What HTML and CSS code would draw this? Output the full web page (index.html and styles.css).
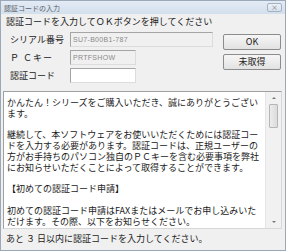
FILE: index.html
```html
<!DOCTYPE html>
<html lang="ja">
<head>
    <meta charset="UTF-8">
    <title>認証コードの入力</title>
    <link rel="stylesheet" href="styles.css">
</head>
<body>
    <div class="window">
        <div class="titlebar">
            <span class="title">認証コードの入力</span>
            <span class="close">×</span>
        </div>
        <div class="content">
            <p class="lead">認証コードを入力してＯＫボタンを押してください</p>
            <div class="top">
                <div class="fields">
                    <div class="row">
                        <span class="label">シリアル番号</span>
                        <div class="field wide readonly">SU7-B00B1-787</div>
                    </div>
                    <div class="row">
                        <span class="label pc">Ｐ Ｃキー</span>
                        <div class="field readonly">PRTFSHOW</div>
                    </div>
                    <div class="row">
                        <span class="label">認証コード</span>
                        <div class="field"></div>
                    </div>
                </div>
                <div class="buttons">
                    <div class="btn">OK</div>
                    <div class="btn">未取得</div>
                </div>
            </div>
            <div class="memo">
                <div class="memo-text">
                    かんたん！シリーズをご購入いただき、誠にありがとうござい<br>
                    ます。<br>
                    <br>
                    継続して、本ソフトウェアをお使いいただくためには認証コー<br>
                    ドを入力する必要があります。認証コードは、正規ユーザーの<br>
                    方がお手持ちのパソコン独自のＰＣキーを含む必要事項を弊社<br>
                    にお知らせいただくことによって取得することができます。<br>
                    <br>
                    【初めての認証コード申請】<br>
                    <br>
                    初めての認証コード申請はFAXまたはメールでお申し込みいた<br>
                    だけます。その際、以下をお知らせください。
                </div>
                <div class="scrollbar">
                    <span class="arrow up"></span>
                    <span class="thumb"></span>
                    <span class="arrow down"></span>
                </div>
            </div>
            <p class="status">あと ３ 日以内に認証コードを入力してください。</p>
        </div>
    </div>
</body>
</html>
```

FILE: styles.css
```css
*{
    box-sizing: border-box;
}
body{
    margin: 0;
    background-color: #f0f0f0;
    font-family: "Noto Sans CJK JP", "Liberation Sans", sans-serif;
    color: #1a1a1a;
}
.window{
    width: 286px;
    height: 251px;
    border: 1px solid #9ba8b8;
    background-color: #f0f0f0;
    overflow: hidden;
}
.titlebar{
    height: 13px;
    display: flex;
    align-items: center;
    justify-content: space-between;
    padding: 0 3px 0 3px;
    background: linear-gradient(#e3ebf5, #d3dfec);
}
.title{
    font-size: 7px;
    line-height: 12px;
    color: #5a606a;
}
.close{
    width: 15px;
    height: 9px;
    border: 1px solid #a3b1c3;
    border-radius: 2px;
    background: linear-gradient(#eef2f7, #d8e1ec);
    font-size: 7px;
    line-height: 7px;
    text-align: center;
    color: #6b7686;
}
.content{
    padding: 0 3px 0 2px;
}
.lead{
    margin: 0 0 0 3px;
    height: 15px;
    font-size: 9px;
    line-height: 15px;
    white-space: nowrap;
}
.top{
    height: 62px;
    display: flex;
}
.fields{
    margin-left: 7px;
    padding-top: 3px;
    display: flex;
    flex-direction: column;
    gap: 3px;
}
.row{
    display: flex;
    align-items: center;
    height: 15px;
}
.label{
    width: 60px;
    font-size: 9px;
    color: #222;
    white-space: nowrap;
}
.label.pc{
    letter-spacing: 1px;
}
.field{
    width: 66px;
    height: 15px;
    border: 1px solid #a5a5a5;
    border-right-color: #dcdcdc;
    border-bottom-color: #dcdcdc;
    background-color: #fff;
    font-family: "Liberation Sans", sans-serif;
    font-size: 7px;
    line-height: 13px;
    padding-left: 2px;
    color: #8a8a8a;
    letter-spacing: 0.3px;
}
.field.wide{
    width: 143px;
}
.field.readonly{
    background-color: #f0f0f0;
}
.buttons{
    margin-left: auto;
    margin-right: 1px;
    padding-top: 5px;
    display: flex;
    flex-direction: column;
    gap: 4px;
}
.btn{
    width: 58px;
    height: 16px;
    border: 1px solid #8c8c8c;
    border-radius: 2px;
    background: linear-gradient(#f6f6f6, #e2e2e2);
    font-size: 9px;
    line-height: 14px;
    text-align: center;
    color: #222;
}
.memo{
    height: 138px;
    display: flex;
    border: 1px solid #a0a0a0;
    border-right-color: #d8d8d8;
    border-bottom-color: #d8d8d8;
    background-color: #fff;
    overflow: hidden;
}
.memo-text{
    flex: 1;
    padding: 6px 0 0 3px;
    font-size: 9px;
    line-height: 10.8px;
    white-space: nowrap;
    overflow: hidden;
}
.scrollbar{
    width: 16px;
    display: flex;
    flex-direction: column;
    align-items: center;
    background-color: #f1f1f1;
    border-left: 1px solid #e6e6e6;
}
.arrow{
    width: 0;
    height: 0;
    border-left: 2px solid transparent;
    border-right: 2px solid transparent;
}
.arrow.up{
    margin-top: 5px;
    border-bottom: 2px solid #777;
}
.arrow.down{
    margin-top: auto;
    margin-bottom: 5px;
    border-top: 2px solid #777;
}
.thumb{
    margin-top: 5px;
    width: 9px;
    height: 24px;
    border: 1px solid #b5b5b5;
    border-radius: 1px;
    background: linear-gradient(90deg, #ececec, #dcdcdc);
}
.status{
    margin: 0 0 0 3px;
    height: 20px;
    font-size: 9px;
    line-height: 20px;
    white-space: nowrap;
}
```
